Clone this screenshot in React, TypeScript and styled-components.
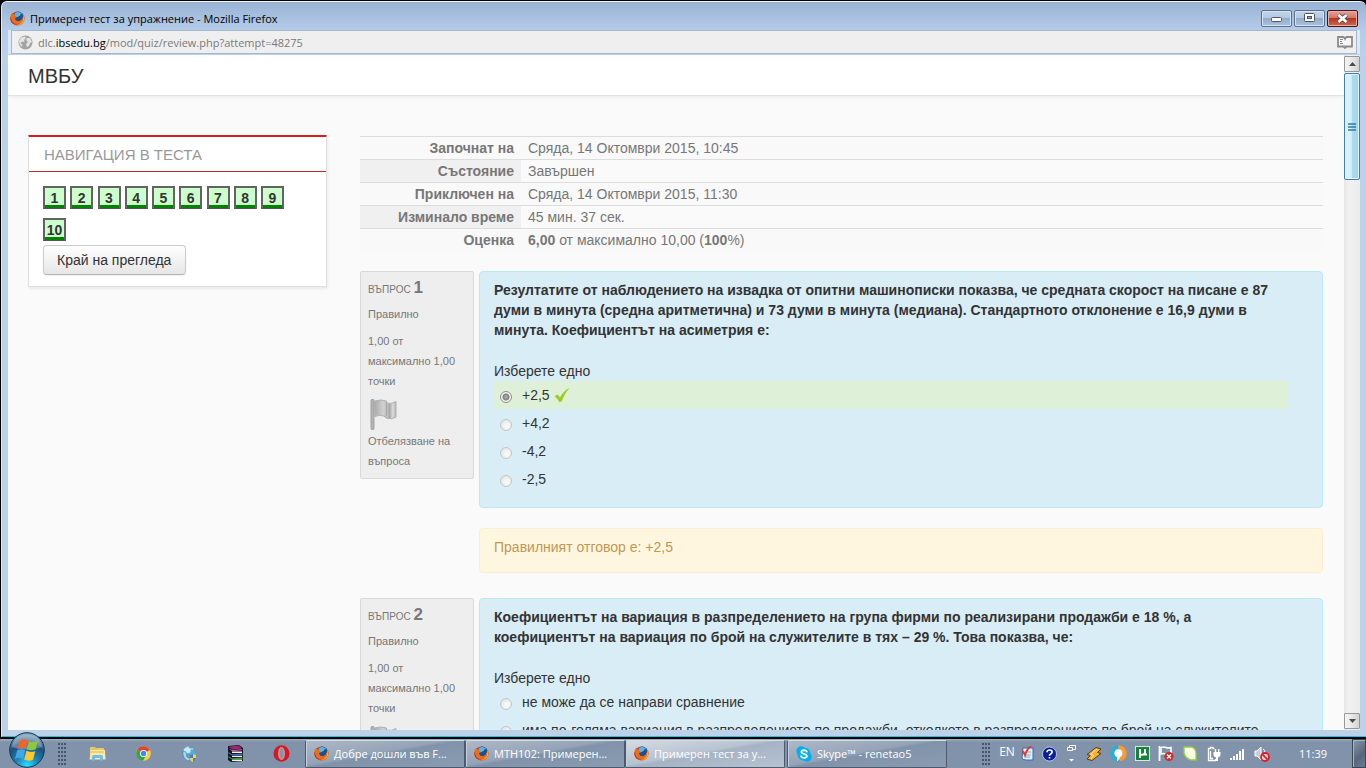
import React from "react";
import styled, { createGlobalStyle, css } from "styled-components";

const Global = createGlobalStyle`
  * { box-sizing: border-box; }
  body { margin: 0; font: 14px/20px "Liberation Sans", Arial, sans-serif; color: #333; background: #000; }
  h1, h2, p { margin: 0; }
  button { font: inherit; padding: 0; border: 0; cursor: pointer; }
`;

const uiFont = css`font-family: "Open Sans", "Noto Sans", sans-serif;`;

/* ---------- desktop and window chrome ---------- */

const Desktop = styled.div`
  height: 100vh;
  display: flex;
  flex-direction: column;
  overflow: hidden;
`;

const Window = styled.section`
  flex: 1;
  min-height: 0;
  display: flex;
  flex-direction: column;
  margin: 1px 0 2px 1px;
  padding: 0 6px 6px 6px;
  border-left: 1px solid #dcebfa;
  border-top: 1px solid #f2f8ff;
  border-bottom: 1px solid #25c3e0;
  border-radius: 6px 6px 0 0;
  background: linear-gradient(#9ab3d3, #b4cce9 28px, #bbd2eb 60px, #bbd2eb);
`;

const TitleBar = styled.header`
  ${uiFont}
  height: 28px;
  flex: none;
  display: flex;
  align-items: center;
  gap: 5px;
  padding: 4px 2px 0 2px;
  font-size: 11px;
  color: #000;
`;

const WindowTitle = styled.h1`
  flex: 1;
  padding-top: 1px;
  font-size: 11px;
  line-height: 16px;
  font-weight: 400;
`;

const CaptionButtons = styled.div`
  display: flex;
  gap: 2px;
`;

const CaptionButton = styled.button<{ $close?: boolean }>`
  width: 31px;
  height: 17px;
  display: flex;
  align-items: center;
  justify-content: center;
  border: 1px solid ${p => (p.$close ? "#4d1016" : "#5a6f8e")};
  border-radius: 2px;
  box-shadow: inset 0 0 0 1px ${p => (p.$close ? "#e9aca3" : "#d5e3f3")};
  background: ${p =>
    p.$close
      ? "linear-gradient(#e5a296, #d27565 48%, #b7341d 50%, #cf6a4c)"
      : "linear-gradient(#c0d3e9, #b3c8e0 48%, #93adc9 50%, #a9c2de)"};
`;

const AddressBar = styled.div`
  ${uiFont}
  height: 24px;
  flex: none;
  display: flex;
  align-items: center;
  gap: 5px;
  margin: 0 3px 1px 3px;
  padding: 1px 3px 0 6px;
  border: 1px solid #a5b7cb;
  background: #efefef;
  box-shadow: -3px 0 0 #dae8f7, 3px 0 0 #dae8f7;
  font-size: 11px;
  color: #7a7a7a;
`;

const Url = styled.span`
  flex: 1;
  b { font-weight: 400; color: #000; }
`;

const Viewport = styled.div`
  flex: 1;
  min-height: 0;
  display: flex;
  background: #fafafa;
`;

const Page = styled.div`
  flex: 1;
  min-width: 0;
  overflow: hidden;
`;

const ScrollBar = styled.div`
  width: 16px;
  flex: none;
  display: flex;
  flex-direction: column;
  padding: 1px 0;
  background: linear-gradient(90deg, #e6e6e6, #f1f1f1 30%, #ececec);
`;

const ScrollButton = styled.button`
  height: 16px;
  display: flex;
  align-items: center;
  justify-content: center;
  border: 1px solid #979797;
  border-radius: 1px;
  background: linear-gradient(90deg, #f4f4f4, #e8e8e8 50%, #d2d2d2);
`;

const ScrollThumb = styled.div`
  height: 107px;
  margin: 1px 0 auto;
  display: flex;
  align-items: center;
  justify-content: center;
  border: 1px solid #3c7fb1;
  border-radius: 2px;
  box-shadow: inset 0 0 0 1px #e6f5fc;
  background: linear-gradient(90deg, #d9effa 45%, #aadbf3 50%, #9dd5f2);
`;

/* ---------- page ---------- */

const SiteHeader = styled.header`
  height: 41px;
  padding: 0 20px;
  border-bottom: 1px solid #e3e3e3;
  box-shadow: 0 1px 4px #0001;
  background: #fff;
  font-size: 20px;
  line-height: 42px;
  color: #333;
`;

const Columns = styled.main`
  display: grid;
  grid-template-columns: 299px minmax(0, 1fr);
  gap: 33px;
  align-items: start;
  padding: 39px 21px 0 20px;
`;

const NavBlock = styled.aside`
  border: 1px solid #e0e0e0;
  border-top: 2px solid #d62020;
  border-radius: 1px;
  background: #fff;
  box-shadow: 1px 2px 3px #0001;
`;

const NavTitle = styled.h2`
  padding: 2px 15px 0;
  border-bottom: 1px solid #c92a2a;
  font-size: 15px;
  line-height: 32px;
  font-weight: 400;
  color: #999;
  text-transform: uppercase;
`;

const NavBody = styled.div`
  padding: 14px 14px 11px;
`;

const QuestionGrid = styled.nav`
  width: 241px;
  display: grid;
  grid-template-columns: repeat(9, 23px);
  justify-content: space-between;
  row-gap: 9px;
  margin-bottom: 4px;
`;

const QuestionLink = styled.a`
  height: 23px;
  border: 2px solid #636363;
  border-bottom: 1px solid #555;
  background: #cfc;
  box-shadow: inset 0 -3px #008300;
  font-weight: 700;
  line-height: 20px;
  text-align: center;
  text-decoration: none;
  color: #333;
`;

const FinishButton = styled.button`
  height: 30px;
  padding: 0 14px 0 13px;
  border: 1px solid #ccc;
  border-bottom-color: #b3b3b3;
  border-radius: 4px;
  background: linear-gradient(#fff, #e6e6e6);
  box-shadow: 0 1px 2px #0001;
  color: #333;
`;

const Content = styled.div`
  padding-top: 1px;
`;

const Summary = styled.table`
  width: 100%;
  margin-bottom: 20px;
  border-collapse: separate;
  border-spacing: 0;
  color: #777;
  th, td { height: 23px; padding: 0 7px; border-top: 1px solid #ddd; line-height: 22px; }
  th { width: 161px; text-align: right; }
  tr:nth-child(odd) { background: #f9f9f9; }
  tr:nth-child(even) th { background: #f0f0f0; }
  td { text-align: left; }
`;

const Question = styled.article`
  display: grid;
  grid-template-columns: 114px minmax(0, 1fr);
  gap: 5px;
  align-items: start;
  margin-bottom: 25px;
`;

const Info = styled.div`
  min-height: 208px;
  padding: 6px 7px;
  border: 1px solid #d9d9d9;
  border-radius: 2px;
  background: #eee;
  font-size: 11px;
  line-height: 20px;
  color: #777;
`;

const InfoTitle = styled.h2`
  margin-bottom: 4px;
  font-size: 10px;
  line-height: 20px;
  font-weight: 400;
  text-transform: uppercase;
  b { font-size: 17px; }
`;

const InfoLine = styled.p`
  margin-bottom: 7px;
`;

const FlagIcon = styled.svg`
  display: block;
  margin: 0 0 0 1px;
`;

const Body = styled.div`
  display: flex;
  flex-direction: column;
  gap: 20px;
`;

const Formulation = styled.div`
  padding: 8px 35px 14px 14px;
  border: 1px solid #bce8f1;
  border-radius: 4px;
  background: #d9edf7;
`;

const QuestionText = styled.p`
  margin-bottom: 21px;
  font-weight: 700;
`;

const Answers = styled.fieldset`
  margin: 0;
  padding: 0;
  border: 0;
  min-width: 0;
  legend { padding: 0; }
`;

const Answer = styled.label<{ $correct?: boolean }>`
  height: 28px;
  display: flex;
  align-items: center;
  gap: 10px;
  padding-left: 6px;
  white-space: nowrap;
  background: ${p => (p.$correct ? "#dff0d8" : "transparent")};
`;

const Radio = styled.input`
  appearance: none;
  flex: none;
  width: 12px;
  height: 12px;
  margin: 4px 0 0;
  border: 1px solid #c3c6c8;
  border-radius: 50%;
  background: radial-gradient(circle at 60% 60%, #f7f7f7 20%, #dcdcdc);
  &:checked {
    border-color: #8e8f8f;
    background: radial-gradient(circle, #a5a5a5 1px, #808080 3px, #f3f3f3 4px);
  }
`;

const AnswerText = styled.span`
  display: flex;
  align-items: center;
  gap: 4px;
`;

const Feedback = styled.div`
  height: 45px;
  padding: 8px 14px;
  border: 1px solid #fbeed5;
  border-radius: 4px;
  background: #fff6df;
  color: #c09853;
`;

/* ---------- taskbar ---------- */

const TaskBar = styled.footer`
  ${uiFont}
  height: 29px;
  flex: none;
  position: relative;
  display: flex;
  align-items: center;
  background: linear-gradient(#a0aebf, #8193aa 3px, #8193aa);
  font-size: 11px;
  line-height: 16px;
  color: #fff;
`;

const StartButton = styled.button`
  align-self: flex-end;
  flex: none;
  width: 36px;
  height: 36px;
  margin: 0 13px 0 9px;
  background: none;
  svg { display: block; }
`;

const Grip = styled.span`
  flex: none;
  width: 9px;
  height: 22px;
  background: radial-gradient(circle at 1px 1px, #46556a 1px, transparent 1px) 0 0 / 3px 4px;
`;

const QuickLaunch = styled.div`
  flex: none;
  display: flex;
  margin: 0 1px 0 7px;
`;

const QuickButton = styled.button`
  width: 46px;
  height: 28px;
  display: flex;
  align-items: center;
  justify-content: center;
  background: none;
`;

const TaskList = styled.div`
  flex: 1;
  min-width: 0;
  display: flex;
`;

const TaskButton = styled.button<{ $active?: boolean; $apart?: boolean }>`
  flex: 0 1 160px;
  min-width: 0;
  height: 28px;
  display: flex;
  align-items: center;
  gap: 5px;
  margin-left: ${p => (p.$apart ? "2px" : "0")};
  padding: 0 8px;
  border: 1px solid #4b5a6e;
  border-top-color: #d4dbe4;
  border-radius: 2px;
  box-shadow: inset 1px 0 #c8d0db;
  background: ${p =>
    p.$active
      ? "linear-gradient(170deg, #d4dae2, #b8c3d0 45%, #a5b3c4 50%, #b7c3d1)"
      : "linear-gradient(170deg, #aeb9c8, #94a3b7 45%, #8093aa 50%, #8b9cb2)"};
  color: #fff;
  white-space: nowrap;
  svg { flex: none; }
`;

const Tray = styled.div`
  flex: none;
  display: flex;
  align-items: center;
`;

const Language = styled.button`
  width: 16px;
  margin: -4px 1px 0 8px;
  background: none;
  font-size: 12px;
  line-height: 16px;
  color: #fff;
`;

const TrayButton = styled.button<{ $w?: number }>`
  width: ${p => p.$w || 24}px;
  height: 24px;
  display: flex;
  align-items: center;
  justify-content: center;
  background: none;
`;

const Clock = styled.time`
  width: 78px;
  text-align: center;
  font-size: 11px;
`;

const ShowDesktop = styled.button`
  width: 14px;
  height: 29px;
  border: 1px solid #3a4656;
  box-shadow: inset 1px 1px #a9b4c2;
  background: linear-gradient(135deg, #8a98aa, #56667c 60%, #6d7d92);
`;

/* ---------- icons ---------- */

const Firefox = ({ size = 15 }: { size?: number }) => (
  <svg width={size} height={size} viewBox="0 0 16 16" aria-hidden="true">
    <circle cx="8" cy="8" r="7.5" fill="#d8500f" />
    <circle cx="8.700" cy="6.300" r="5.700" fill="#1c4f94" />
    <path d="M5 2.500q4-3 8 .5-2 0-2.500 2L7 7 5 5z" fill="#57b6e8" />
    <path d="M.7 5Q1.200 2.800 2.600 1.700 2.800 3 3.700 3.600q1.300-.4 2.300.2Q5 4.700 5.400 5.700l1.800.5Q6 7.300 5.200 8q.8 3.200 4.200 2.800 3.600-.8 4-4.300Q15 9.500 12 12.500 6 16 2 11 0 8 .7 5z" fill="#e8701a" />
    <path d="M13.500 3.500Q16 7 14.500 11 12 15.500 7 15q6-1.500 7-6 .4-3-.5-5.500z" fill="#fcc72b" />
    <path d="M1 6q0 6 5 8.500Q.5 14 .3 8z" fill="#c3310f" />
  </svg>
);

const Globe = () => (
  <svg width="15" height="15" viewBox="0 0 15 15" aria-hidden="true">
    <circle cx="7.500" cy="7.500" r="7" fill="#a3a3a3" />
    <path d="M3 2.500 7 1.500 8 3 6 5 6.500 7 4 6.500 2.500 8 4.500 10 4 12 1.500 9 1 6zM9 3l3 0 2 4-2 1-1 3-2 1-1-3 2-2-2-2z" fill="#e4e4e4" />
  </svg>
);

const Reader = () => (
  <svg width="16" height="13" viewBox="0 0 16 13" aria-hidden="true">
    <path d="M1 1h5.500L8 2.500 9.500 1H15v9.500H9.500L8 12l-1.500-1.500H1z" fill="#f6f6f6" stroke="#8b8b8b" strokeWidth="1.800" />
    <path d="M3 3.500h3M3 5.500h2M3 7.500h3M8 3v1.500M8 9v1.500" stroke="#8b8b8b" />
  </svg>
);

const MinimizeIcon = () => (
  <svg width="12" height="10" viewBox="0 0 12 10" aria-hidden="true">
    <rect x=".5" y="4.500" width="10" height="4" rx="1" fill="#fff" stroke="#4f5663" />
  </svg>
);

const MaximizeIcon = () => (
  <svg width="12" height="10" viewBox="0 0 12 10" aria-hidden="true">
    <rect x=".5" y=".5" width="10" height="8" rx="1" fill="#fff" stroke="#4f5663" />
    <rect x="3.500" y="3.500" width="4" height="2" fill="#8fa9c9" stroke="#4f5663" />
  </svg>
);

const CloseIcon = () => (
  <svg width="13" height="11" viewBox="0 0 13 11" aria-hidden="true">
    <path d="M2.500 2l8 7M10.500 2l-8 7" stroke="#4f5663" strokeWidth="4.400" />
    <path d="M2.500 2l8 7M10.500 2l-8 7" stroke="#fff" strokeWidth="2.600" />
  </svg>
);

const Arrow = ({ down }: { down?: boolean }) => (
  <svg width="7" height="4" viewBox="0 0 7 4" aria-hidden="true">
    <path d={down ? "M0 0h7L3.500 4z" : "M0 4h7L3.500 0z"} fill="#4c4c4c" />
  </svg>
);

const Check = () => (
  <svg width="16" height="16" viewBox="0 0 16 16" aria-hidden="true">
    <path d="M.6 9.200 3.300 7.500Q5 8.600 5.900 10.600 9 4.500 15.500.8 10 7.300 7.600 14.600L5.500 15.200Q3.500 11.500.6 9.200z" fill="#97cf26" />
  </svg>
);

const Flag = () => (
  <FlagIcon width="28" height="33" viewBox="0 0 28 33" aria-hidden="true">
    <defs>
      <linearGradient id="cloth">
        <stop offset="0" stopColor="#aaa" />
        <stop offset=".4" stopColor="#d0d0d0" />
        <stop offset=".62" stopColor="#bdbdbd" />
        <stop offset=".7" stopColor="#a8a8a8" />
        <stop offset=".85" stopColor="#dcdcdc" />
        <stop offset="1" stopColor="#b4b4b4" />
      </linearGradient>
    </defs>
    <rect x="2" y="1.500" width="3" height="30" rx="1" fill="#b3b3b3" stroke="#a2a2a2" />
    <path d="M5.500 3Q12 1 17.500 3v2q5 1.500 9.500-1.500V19q-4 3-10 1l-2-2q-5-1.500-9 .5z" fill="url(#cloth)" stroke="#b0b0b0" />
    <path d="M17.500 4.500V17l-2 1.500" fill="none" stroke="#a5a5a5" />
  </FlagIcon>
);

const StartOrb = () => (
  <svg width="36" height="36" viewBox="0 0 36 36" aria-hidden="true">
    <defs>
      <radialGradient id="orb" cx=".5" cy=".95" r=".9">
        <stop offset="0" stopColor="#2de0ff" />
        <stop offset=".35" stopColor="#1b87b8" />
        <stop offset=".7" stopColor="#1f4f7c" />
        <stop offset="1" stopColor="#7da3c0" />
      </radialGradient>
    </defs>
    <circle cx="18" cy="18" r="17.300" fill="url(#orb)" stroke="#143852" />
    <path d="M3 15Q5 3 18 2.500 31 3 33 15 18 20 3 15z" fill="#fff" opacity=".28" />
    <path d="M10.500 8.500q4-2.500 8 0l-2 8.500q-4-2-8 0z" fill="#f0642b" />
    <path d="M19.800 9.200q4.200 2 9.200-.7l-2.500 9q-4.500 1.800-8.700-.3z" fill="#8fc73e" />
    <path d="M8.200 18.300q4-2 8 0L14 27q-4-2.500-8 0z" fill="#45a6e6" />
    <path d="M17.400 18.800q4 2 8.800.4L24 27.700q-4.500 2-8.800-.2z" fill="#fdc82f" />
  </svg>
);

const Explorer = () => (
  <svg width="17" height="15" viewBox="0 0 17 15" aria-hidden="true">
    <path d="M1 2q0-1 1-1h4l1 1h7q1 0 1 1v10H1z" fill="#e8ca6a" />
    <path d="M2 4h14l.5 9.500H.5z" fill="#fae9a4" />
    <path d="M2 6h13M3 3h5" stroke="#dcb64f" />
    <path d="M3 14.500V11q0-2 2-2h7q2 0 2 2v3.500h-3V12H6v2.500z" fill="#72bde8" />
  </svg>
);

const Chrome = () => (
  <svg width="15" height="15" viewBox="0 0 16 16" aria-hidden="true">
    <circle cx="8" cy="8" r="7.800" fill="#fbd13a" />
    <path d="M8 8 1.300 4A7.800 7.800 0 0 1 14.800 4.200z" fill="#de4533" />
    <path d="M1.300 4A7.800 7.800 0 0 0 7.500 15.800L11 9.500 8 8z" fill="#31a350" />
    <circle cx="8" cy="8" r="3.800" fill="#fff" />
    <circle cx="8" cy="8" r="2.900" fill="#4588e8" />
  </svg>
);

const Sync = () => (
  <svg width="15" height="16" viewBox="0 0 15 16" aria-hidden="true">
    <path d="M1 4q2-4 7-4L7 2l5 0-3 5-6 1z" fill="#c4eafa" stroke="#3f9bcb" strokeWidth=".6" />
    <path d="M1 5l3 1 1 5 4 2-3 2Q0 12 1 5z" fill="#9fdaf4" stroke="#2686bd" strokeWidth=".6" />
    <path d="M9 3q4 1 4 6L8 8z" fill="#4fb0de" />
    <path d="M8 9l3-1 3 1v3q-1 3-3 4-3-1-3-4z" fill="#f8d541" />
    <path d="M11 8v4H8V9zM11 12h3q-1 3-3 4z" fill="#3a7fd0" />
  </svg>
);

const WinRar = () => (
  <svg width="17" height="17" viewBox="0 0 17 17" aria-hidden="true">
    <path d="M1 1 12 0l4 3v13l-12 1-3-2z" fill="#16151a" />
    <path d="M1.500 1.500 12 .8 15 3.500 5 4.500z" fill="#a3207e" />
    <path d="M1.500 3.500 5 6l10-.7v-1L5 5z" fill="#d067b4" />
    <path d="M5 6.500h10V8H5zM5 10.700h10V12H5zM5 14.500h10V16H5z" fill="#f1efe6" />
    <path d="M1.500 7 4.500 9.200 15.500 8.600v1.600H4.500l-3-1.700z" fill="#3479c4" />
    <path d="M1.500 11 4.500 13.200l11-.6v1.600h-11l-3-1.700z" fill="#3b9a48" />
  </svg>
);

const Opera = () => (
  <svg width="17" height="17" viewBox="0 0 17 17" aria-hidden="true">
    <ellipse cx="8.500" cy="8.500" rx="8" ry="8.200" fill="#cf1b26" />
    <ellipse cx="8.500" cy="8.500" rx="3.500" ry="6.500" fill="#e88a8b" />
    <ellipse cx="8.500" cy="8.500" rx="2" ry="5.800" fill="#8495ab" />
  </svg>
);

const Skype = () => (
  <svg width="16" height="16" viewBox="0 0 16 16" aria-hidden="true">
    <circle cx="5" cy="5" r="4.700" fill="#00aff0" />
    <circle cx="11" cy="11" r="4.700" fill="#00aff0" />
    <circle cx="8" cy="8" r="6.600" fill="#00aff0" />
    <path d="M10.800 5.600Q10 4.200 8 4.200 5.400 4.300 5.400 6 5.400 7.400 8 7.900q2.800.5 2.800 2.100 0 1.800-2.700 1.900-2.200 0-3-1.600" fill="none" stroke="#fff" strokeWidth="1.800" strokeLinecap="round" />
  </svg>
);

const CheckDocument = () => (
  <svg width="13" height="16" viewBox="0 0 13 16" aria-hidden="true">
    <path d="M2 2h10v12H5q-3 0-4-2z" fill="#e6f1ff" stroke="#3569bb" />
    <path d="M4 6h6M4 9h6M4 11h5" stroke="#7fa6dc" />
    <path d="M1 5q2 1 3 4Q6 3 10 0" fill="none" stroke="#e43a25" strokeWidth="2" />
  </svg>
);

const Help = () => (
  <svg width="15" height="16" viewBox="0 0 15 16" aria-hidden="true">
    <circle cx="7.500" cy="8" r="7" fill="#0c1f98" stroke="#cdd5f5" strokeWidth=".8" />
    <path d="M5 6.300Q5 4 7.600 4t2.500 2q0 1.200-1.400 1.900Q7.500 8.500 7.500 9.700M7.500 11v1.500" fill="none" stroke="#fff" strokeWidth="1.700" />
  </svg>
);

const Restore = () => (
  <svg width="9" height="17" viewBox="0 0 9 17" aria-hidden="true">
    <path d="M2.500 2.500v-2h6v4h-3M.5 2.500h5v3h-5z" fill="none" stroke="#fff" />
    <path d="M2 14h5l-2.500 2.500z" fill="#fff" />
  </svg>
);

const Winamp = () => (
  <svg width="16" height="16" viewBox="0 0 16 16" aria-hidden="true">
    <path d="M10 1.500 15 3l-3.500 3.500L15 7.500 6 14.500 1 13l3.500-3.500L1 8.500z" fill="#f9b42f" stroke="#563d12" />
    <path d="M11 3 4 8.500 7.500 9.500 5 13" fill="none" stroke="#fde39b" />
  </svg>
);

const Avast = () => (
  <svg width="17" height="17" viewBox="0 0 17 17" aria-hidden="true">
    <path d="M8.500 2.200A6.300 6.300 0 1 0 8.500 14.800" fill="none" stroke="#26b1d8" strokeWidth="4" />
    <path d="M8.500 2.200A6.300 6.300 0 0 1 10 14.600" fill="none" stroke="#f99b26" strokeWidth="4" />
    <circle cx="8.500" cy="8.200" r="4" fill="#fff" />
    <path d="M7 16q3-1 3-5l-3 1z" fill="#fff" />
  </svg>
);

const MicroTorrent = () => (
  <svg width="15" height="15" viewBox="0 0 15 15" aria-hidden="true">
    <rect x=".5" y=".5" width="14" height="14" fill="#16823a" stroke="#d5e9d9" />
    <path d="M5 3v9M5 8q3 2 5-1V3M10 7v1.500h2" fill="none" stroke="#fff" strokeWidth="2" />
  </svg>
);

const ErrorFlag = () => (
  <svg width="16" height="17" viewBox="0 0 16 17" aria-hidden="true">
    <path d="M1.500 1v15" stroke="#fff" strokeWidth="1.800" />
    <path d="M3 2.500q3-1 5 0t5 0V9q-3 1-5 0T3 9z" fill="#8193aa" stroke="#fff" strokeWidth="1.600" />
    <circle cx="11" cy="11.500" r="4.500" fill="#d32826" />
    <path d="M9 9.500l4 4M13 9.500l-4 4" stroke="#fff" strokeWidth="1.400" />
  </svg>
);

const Leaf = () => (
  <svg width="14" height="15" viewBox="0 0 14 15" aria-hidden="true">
    <path d="M1 1h8q4 2 4 6v7H8Q2 12 1 7z" fill="#f5ffe1" stroke="#98cb45" strokeWidth="1.300" />
  </svg>
);

const Power = () => (
  <svg width="15" height="16" viewBox="0 0 15 16" aria-hidden="true">
    <path d="M7.500 2.500H6v-1H3.500v1h-2v12h7V13M3.500 5v7.500H6" fill="none" stroke="#fff" strokeWidth="1.300" />
    <path d="M6.500 6h7v3q-1 2-2.500 2.500V15H9v-3.500Q7 11 6.500 9z" fill="#fff" />
    <path d="M8.500 6V3M11.700 6V3" stroke="#fff" strokeWidth="1.400" />
  </svg>
);

const Signal = () => (
  <svg width="16" height="12" viewBox="0 0 16 12" aria-hidden="true">
    {[2, 4, 6, 9, 11].map((h, i) => (
      <rect key={h} x={i * 3} y={12 - h} width="2" height={h} fill="#fff" />
    ))}
  </svg>
);

const Muted = () => (
  <svg width="16" height="16" viewBox="0 0 16 16" aria-hidden="true">
    <path d="M1 5h2l4-4v13l-4-4H1z" fill="#c5ced9" stroke="#fff" />
    <circle cx="11" cy="11" r="4" fill="#f3d9db" stroke="#d8222a" strokeWidth="1.800" />
    <path d="M8.200 8.200l5.600 5.600" stroke="#d8222a" strokeWidth="1.800" />
    <path d="M9 3q2 1 2 3" fill="none" stroke="#fff" />
  </svg>
);

/* ---------- data ---------- */

const summary: [string, React.ReactNode][] = [
  ["Започнат на", "Сряда, 14 Октомври 2015, 10:45"],
  ["Състояние", "Завършен"],
  ["Приключен на", "Сряда, 14 Октомври 2015, 11:30"],
  ["Изминало време", "45 мин. 37 сек."],
  ["Оценка", <><b>6,00</b> от максимално 10,00 (<b>100</b>%)</>],
];

const questions = [
  {
    text: "Резултатите от наблюдението на извадка от опитни машинописки показва, че средната скорост на писане е 87 думи в минута (средна аритметична) и 73 думи в минута (медиана). Стандартното отклонение е 16,9 думи в минута. Коефициентът на асиметрия е:",
    answers: ["+2,5", "+4,2", "-4,2", "-2,5"],
    chosen: 0,
    feedback: "Правилният отговор е: +2,5",
  },
  {
    text: "Коефициентът на вариация в разпределението на група фирми по реализирани продажби е 18 %, а коефициентът на вариация по брой на служителите в тях – 29 %. Това показва, че:",
    answers: [
      "не може да се направи сравнение",
      "има по-голяма вариация в разпределението по продажби, отколкото в разпределението по брой на служителите",
    ],
    chosen: -1,
    feedback: "",
  },
];

const quick: [string, React.ReactNode][] = [
  ["Explorer", <Explorer />],
  ["Chrome", <Chrome />],
  ["Sync", <Sync />],
  ["WinRAR", <WinRar />],
  ["Opera", <Opera />],
];

const tray: [string, React.ReactNode][] = [
  ["Winamp", <Winamp />],
  ["Avast", <Avast />],
  ["Torrent", <MicroTorrent />],
  ["Action center", <ErrorFlag />],
  ["Leaf", <Leaf />],
  ["Power", <Power />],
  ["Network", <Signal />],
  ["Volume", <Muted />],
];

export default function App() {
  return (
    <>
      <Global />
      <Desktop>
        <Window>
          <TitleBar>
            <Firefox />
            <WindowTitle>Примерен тест за упражнение - Mozilla Firefox</WindowTitle>
            <CaptionButtons>
              <CaptionButton aria-label="Minimize"><MinimizeIcon /></CaptionButton>
              <CaptionButton aria-label="Maximize"><MaximizeIcon /></CaptionButton>
              <CaptionButton aria-label="Close" $close><CloseIcon /></CaptionButton>
            </CaptionButtons>
          </TitleBar>
          <AddressBar>
            <Globe />
            <Url>dlc.<b>ibsedu.bg</b>/mod/quiz/review.php?attempt=48275</Url>
            <Reader />
          </AddressBar>
          <Viewport>
            <Page>
              <SiteHeader>МВБУ</SiteHeader>
              <Columns>
                <NavBlock>
                  <NavTitle>Навигация в теста</NavTitle>
                  <NavBody>
                    <QuestionGrid>
                      {Array.from({ length: 10 }, (_, i) => (
                        <QuestionLink key={i} href={`#q${i + 1}`}>{i + 1}</QuestionLink>
                      ))}
                    </QuestionGrid>
                    <FinishButton>Край на прегледа</FinishButton>
                  </NavBody>
                </NavBlock>
                <Content>
                  <Summary>
                    <tbody>
                      {summary.map(([label, value]) => (
                        <tr key={label}><th scope="row">{label}</th><td>{value}</td></tr>
                      ))}
                    </tbody>
                  </Summary>
                  {questions.map((q, n) => (
                    <Question key={n} id={`q${n + 1}`}>
                      <Info>
                        <InfoTitle>Въпрос <b>{n + 1}</b></InfoTitle>
                        <InfoLine>Правилно</InfoLine>
                        <InfoLine>1,00 от максимално 1,00 точки</InfoLine>
                        <Flag />
                        <p>Отбелязване на въпроса</p>
                      </Info>
                      <Body>
                        <Formulation>
                          <QuestionText>{q.text}</QuestionText>
                          <Answers>
                            <legend>Изберете едно</legend>
                            {q.answers.map((a, i) => (
                              <Answer key={a} $correct={i === q.chosen}>
                                <Radio type="radio" name={`answer${n}`} disabled defaultChecked={i === q.chosen} />
                                <AnswerText>{a}{i === q.chosen && <Check />}</AnswerText>
                              </Answer>
                            ))}
                          </Answers>
                        </Formulation>
                        {q.feedback && <Feedback>{q.feedback}</Feedback>}
                      </Body>
                    </Question>
                  ))}
                </Content>
              </Columns>
            </Page>
            <ScrollBar>
              <ScrollButton aria-label="Scroll up"><Arrow /></ScrollButton>
              <ScrollThumb>
                <svg width="8" height="8" viewBox="0 0 8 8" aria-hidden="true">
                  <path d="M0 1h8M0 4h8M0 7h8" stroke="#2f7ca6" strokeWidth="1.400" />
                </svg>
              </ScrollThumb>
              <ScrollButton aria-label="Scroll down"><Arrow down /></ScrollButton>
            </ScrollBar>
          </Viewport>
        </Window>
        <TaskBar>
          <StartButton aria-label="Start"><StartOrb /></StartButton>
          <Grip />
          <QuickLaunch>
            {quick.map(([name, icon]) => (
              <QuickButton key={name} aria-label={name}>{icon}</QuickButton>
            ))}
          </QuickLaunch>
          <TaskList>
            <TaskButton><Firefox />Добре дошли във F...</TaskButton>
            <TaskButton><Firefox />MTH102: Примерен...</TaskButton>
            <TaskButton $active><Firefox />Примерен тест за у...</TaskButton>
            <TaskButton $apart><Skype />Skype™ - renetao5</TaskButton>
          </TaskList>
          <Tray>
            <Grip />
            <Language>EN</Language>
            <TrayButton $w={22} aria-label="Language options"><CheckDocument /></TrayButton>
            <TrayButton $w={22} aria-label="Help"><Help /></TrayButton>
            <TrayButton $w={22} aria-label="Restore"><Restore /></TrayButton>
            {tray.map(([name, icon]) => (
              <TrayButton key={name} aria-label={name}>{icon}</TrayButton>
            ))}
            <Clock>11:39</Clock>
            <ShowDesktop aria-label="Show desktop" />
          </Tray>
        </TaskBar>
      </Desktop>
    </>
  );
}
